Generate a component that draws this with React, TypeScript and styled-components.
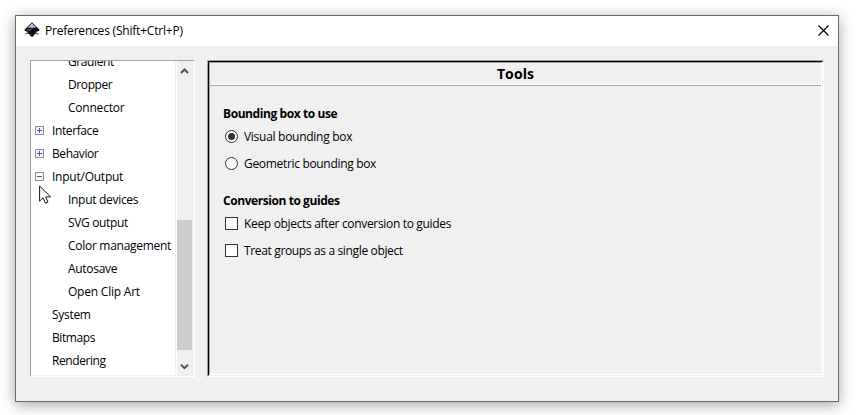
import React from 'react';
import styled, { createGlobalStyle } from 'styled-components';

const Global = createGlobalStyle`
  * { box-sizing: border-box; }
  html, body { margin: 0; background: #fff; overflow: hidden; }
  body { font-family: "Open Sans", "Noto Sans", sans-serif; font-size: 12px; color: #000; }
`;

const Desktop = styled.div`
  width: 856px;
  height: 415px;
  padding: 15px 17px 13px 15px;
  overflow: hidden;
`;

const Window = styled.div`
  display: flex;
  flex-direction: column;
  width: 824px;
  height: 387px;
  border: 1px solid #6b6b6b;
  background: #f0f0f0;
  box-shadow: 0 3px 14px rgba(0, 0, 0, 0.36);
`;

const TitleBar = styled.header`
  display: flex;
  align-items: center;
  flex: 0 0 30px;
  padding: 0 9px 2px 8px;
  background: #fff;
`;

const Fitted = styled.span<{ $spacing?: number }>`
  white-space: nowrap;
  letter-spacing: ${(p) => p.$spacing ?? 0}px;
`;

const Title = styled(Fitted)`
  flex: 1;
  margin-left: 5px;
`;

const Body = styled.div`
  display: flex;
  gap: 12px;
  padding: 14px 14px 0;
`;

const TreeFrame = styled.div`
  display: flex;
  width: 165px;
  height: 317px;
  border: 1px solid;
  border-color: #a0a0a0 #fff #fff #a0a0a0;
  background: #f0f0f0;
`;

const TreeView = styled.div`
  display: flex;
  flex-direction: column;
  justify-content: flex-end;
  width: 144px;
  height: 314px;
  padding-bottom: 3px;
  overflow: hidden;
  background: #fff;
`;

const TreeRow = styled.div<{ $child?: boolean }>`
  display: flex;
  flex: 0 0 23px;
  align-items: center;
  padding-left: ${(p) => (p.$child ? 37 : 4)}px;
`;

const Toggle = styled.span`
  display: flex;
  width: 17px;
`;

const ScrollBar = styled.div`
  display: flex;
  flex-direction: column;
  width: 17px;
  margin-left: 1px;
  border-left: 1px solid #fff;
  background: #f0f0f0;
`;

const ScrollButton = styled.div`
  display: flex;
  flex: 0 0 20px;
  width: 15px;
  align-items: center;
  justify-content: center;
`;

const ScrollTrack = styled.div`
  display: flex;
  flex: 1;
  align-items: flex-end;
  padding-bottom: 6px;
`;

const ScrollThumb = styled.div`
  width: 15px;
  height: 130px;
  background: #cdcdcd;
`;

const Panel = styled.main`
  width: 617px;
  height: 317px;
  border: 1px solid;
  border-color: #a0a0a0 #fff #fff #a0a0a0;
`;

const PanelInner = styled.div`
  height: 315px;
  border: 1px solid;
  border-color: #000 #f0f0f0 #f0f0f0 #000;
`;

const PanelBevel = styled.div`
  height: 313px;
  border: 1px solid;
  border-color: #a0a0a0 #fff #fff #a0a0a0;
`;

const PanelTitle = styled.h1`
  display: flex;
  align-items: center;
  justify-content: center;
  height: 23px;
  margin: 0;
  padding-bottom: 1px;
  border-bottom: 1px solid #a0a0a0;
  box-shadow: inset 0 -1px #fff;
  font-size: 14px;
  font-weight: 700;
`;

const Group = styled.section`
  display: flex;
  flex-direction: column;
  padding: 17px 0 0 13px;
  & + & { padding-top: 13px; }
`;

const GroupTitle = styled.h2`
  display: flex;
  align-items: center;
  height: 20px;
  margin: 0;
  font-size: 12px;
  font-weight: 700;
`;

const Option = styled.div`
  display: flex;
  align-items: center;
  gap: 6px;
  height: 27px;
  padding-left: 2px;
`;

const RadioMark = styled.span<{ $on?: boolean }>`
  display: flex;
  align-items: center;
  justify-content: center;
  width: 13px;
  height: 13px;
  border: 1px solid #333;
  border-radius: 50%;
  background: #fff;
  &::after {
    content: '';
    width: 7px;
    height: 7px;
    border-radius: 50%;
    background: ${(p) => (p.$on ? '#333' : 'transparent')};
  }
`;

const CheckMark = styled.span`
  width: 13px;
  height: 13px;
  border: 1px solid #333;
  background: #fff;
`;

const Pointer = styled.svg`
  position: absolute;
  left: 39px;
  top: 185px;
`;

const Logo = () => (
  <svg width="16" height="16" viewBox="0 0 16 16">
    <path d="M8 .3 15.300 7.400c1 1-.3 1.800-1.700 2.100l-2.200.4c.4.6 2 .5 1.500 1.300-.5.700-2 .6-2.500 1.100-.4.300.1.600-.3 1-.5.600-1.300 1.400-2.100 1.700-.8-.300-1.600-.9-2.100-1.500-.3-.4.1-.8-.3-1.100-.8-.5-2.100-.4-2.600-1.100-.4-.7.900-.8 1.200-1.300L2.400 9.500C1 9.200-.3 8.400.7 7.400Z" fill="#0b1018" />
    <path d="M8 1.300 12 5.200 10.700 6.100 9.300 5.300 8 6.500 6.500 5.300 5 6.100 4 5.300Z" fill="#b4c0d0" />
    <path d="M3 7.800h4.500" stroke="#506680" strokeWidth="1.200" />
    <path d="M13 12h1.500M1.500 11.500h1.200" stroke="#111820" />
  </svg>
);

const Expander = ({ open }: { open?: boolean }) => (
  <svg width="9" height="9" viewBox="0 0 9 9" shapeRendering="crispEdges">
    <rect x=".5" y=".5" width="8" height="8" fill="#f8f8f8" stroke="#919191" />
    <path d={open ? 'M2 4.500h5' : 'M2 4.500h5M4.500 2v5'} stroke="#3f5bb0" />
  </svg>
);

const Chevron = ({ down }: { down?: boolean }) => (
  <svg width="9" height="7" viewBox="0 0 9 7">
    <path d={down ? 'M1 1.700 4.500 5.200 8 1.700' : 'M1 5 4.500 1.500 8 5'} fill="none" stroke="#505050" strokeWidth="2" />
  </svg>
);

type Node = { name: string; child?: boolean; toggle?: 'open' | 'closed'; spacing: number };

const nodes: Node[] = [
  { name: 'Gradient', child: true, spacing: -0.4 },
  { name: 'Dropper', child: true, spacing: -0.4 },
  { name: 'Connector', child: true, spacing: -0.22 },
  { name: 'Interface', toggle: 'closed', spacing: -0.4 },
  { name: 'Behavior', toggle: 'closed', spacing: -0.42 },
  { name: 'Input/Output', toggle: 'open', spacing: -0.24 },
  { name: 'Input devices', child: true, spacing: -0.3 },
  { name: 'SVG output', child: true, spacing: -0.34 },
  { name: 'Color management', child: true, spacing: -0.28 },
  { name: 'Autosave', child: true, spacing: -0.3 },
  { name: 'Open Clip Art', child: true, spacing: -0.22 },
  { name: 'System', spacing: -0.3 },
  { name: 'Bitmaps', spacing: -0.4 },
  { name: 'Rendering', spacing: -0.42 },
];

export default function App() {
  return (
    <>
      <Global />
      <Desktop>
        <Window>
          <TitleBar>
            <Logo />
            <Title $spacing={-0.2}>Preferences (Shift+Ctrl+P)</Title>
            <svg width="11" height="11" viewBox="0 0 11 11">
              <path d="M.5.5l10 10M10.500.5l-10 10" stroke="#000" strokeWidth="1.100" />
            </svg>
          </TitleBar>
          <Body>
            <TreeFrame>
              <TreeView>
                {nodes.map((n) => (
                  <TreeRow key={n.name} $child={n.child}>
                    {!n.child && <Toggle>{n.toggle && <Expander open={n.toggle === 'open'} />}</Toggle>}
                    <Fitted $spacing={n.spacing}>{n.name}</Fitted>
                  </TreeRow>
                ))}
              </TreeView>
              <ScrollBar>
                <ScrollButton><Chevron /></ScrollButton>
                <ScrollTrack><ScrollThumb /></ScrollTrack>
                <ScrollButton><Chevron down /></ScrollButton>
              </ScrollBar>
            </TreeFrame>
            <Panel>
              <PanelInner>
                <PanelBevel>
                  <PanelTitle><Fitted $spacing={0.1}>Tools</Fitted></PanelTitle>
                  <Group>
                    <GroupTitle><Fitted $spacing={-0.42}>Bounding box to use</Fitted></GroupTitle>
                    <Option><RadioMark $on /><Fitted $spacing={-0.28}>Visual bounding box</Fitted></Option>
                    <Option><RadioMark /><Fitted $spacing={-0.32}>Geometric bounding box</Fitted></Option>
                  </Group>
                  <Group>
                    <GroupTitle><Fitted $spacing={-0.43}>Conversion to guides</Fitted></GroupTitle>
                    <Option><CheckMark /><Fitted $spacing={-0.33}>Keep objects after conversion to guides</Fitted></Option>
                    <Option><CheckMark /><Fitted $spacing={-0.35}>Treat groups as a single object</Fitted></Option>
                  </Group>
                </PanelBevel>
              </PanelInner>
            </Panel>
          </Body>
        </Window>
      </Desktop>
      <Pointer width="13" height="20" viewBox="0 0 13 20">
        <path d="M.6 1v15.200l3.500-3.400 2.300 5.400 2.600-1.100-2.300-5.200h4.900Z" fill="#fff" stroke="#15151f" />
      </Pointer>
    </>
  );
}
